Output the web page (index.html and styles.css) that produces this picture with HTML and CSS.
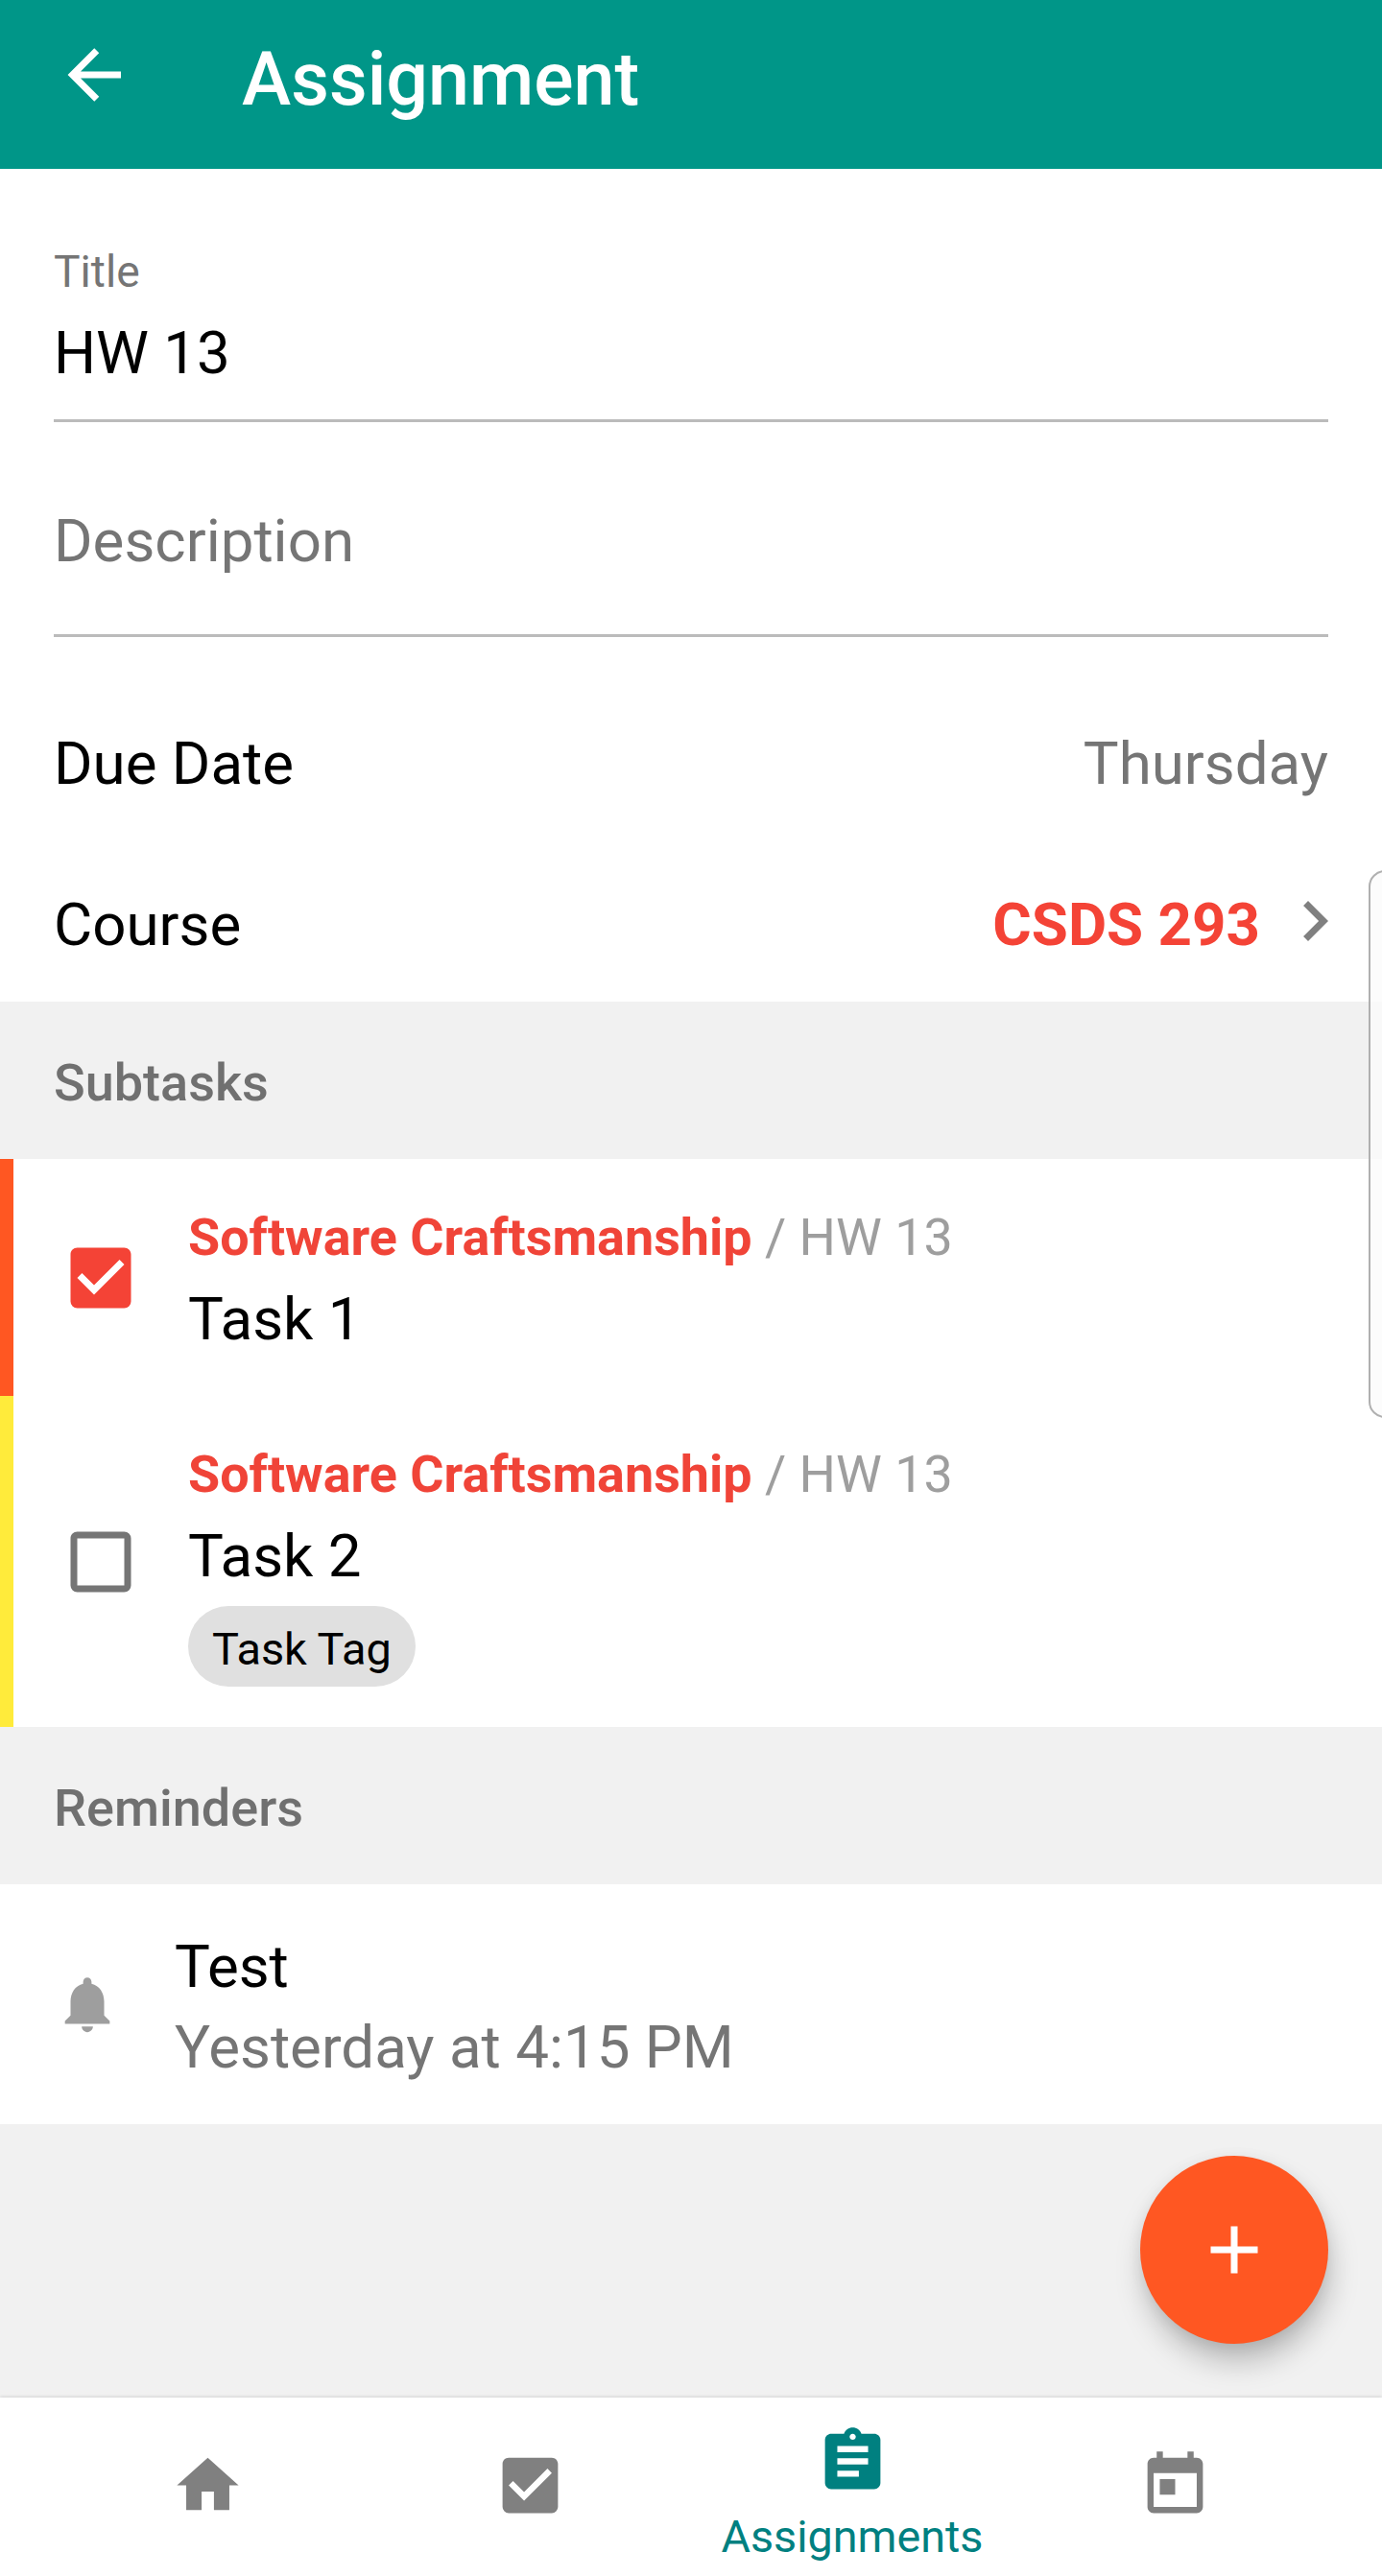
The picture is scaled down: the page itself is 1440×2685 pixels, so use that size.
FILE: index.html
```html
<!DOCTYPE html>
<html lang="en">
<head>
<meta charset="utf-8">
<title>Assignment</title>
<link rel="stylesheet" href="styles.css">
</head>
<body>
<div class="screen">
  <header class="app-bar">
    <svg class="icon" viewBox="0 0 24 24"><path d="M20 11v2H8l5.5 5.5-1.42 1.42L4.16 12l7.92-7.92L13.5 5.5 8 11h12z"/></svg>
    <h1 class="app-title">Assignment</h1>
  </header>

  <main class="content">
    <section class="form">
      <div class="field">
        <span class="field-label">Title</span>
        <span class="field-value">HW 13</span>
      </div>
      <div class="field field-empty">
        <span class="field-value muted">Description</span>
      </div>
      <div class="row row-date">
        <span>Due Date</span>
        <span class="muted">Thursday</span>
      </div>
      <div class="row">
        <span>Course</span>
        <span class="course-link">CSDS 293
          <svg class="icon chevron" viewBox="0 0 24 24"><path d="M8.59 16.58L13.17 12 8.59 7.41 10 6l6 6-6 6z"/></svg>
        </span>
      </div>
    </section>

    <h2 class="section-title">Subtasks</h2>
    <ul class="tasks">
      <li class="task task-high">
        <svg class="icon check-on" viewBox="0 0 24 24"><path d="M10 17l-5-5 1.41-1.42L10 14.17l7.59-7.59L19 8m0-5H5c-1.11 0-2 .89-2 2v14a2 2 0 0 0 2 2h14a2 2 0 0 0 2-2V5c0-1.11-.9-2-2-2z"/></svg>
        <div class="task-body">
          <div class="task-path"><b>Software Craftsmanship</b> / HW 13</div>
          <div class="task-name">Task 1</div>
        </div>
      </li>
      <li class="task task-medium">
        <svg class="icon check-off" viewBox="0 0 24 24"><path d="M19 3H5c-1.11 0-2 .89-2 2v14a2 2 0 0 0 2 2h14a2 2 0 0 0 2-2V5a2 2 0 0 0-2-2m0 2v14H5V5h14z"/></svg>
        <div class="task-body">
          <div class="task-path"><b>Software Craftsmanship</b> / HW 13</div>
          <div class="task-name">Task 2</div>
          <span class="chip">Task Tag</span>
        </div>
      </li>
    </ul>

    <h2 class="section-title">Reminders</h2>
    <div class="reminder">
      <svg class="bell" viewBox="0 0 24 24"><path d="M12 22c1.1 0 2-.9 2-2h-4c0 1.1.89 2 2 2zm6-6v-5c0-3.07-1.64-5.64-4.5-6.32V4c0-.83-.67-1.5-1.5-1.5s-1.5.67-1.5 1.5v.68C7.63 5.36 6 7.92 6 11v5l-2 2v1h16v-1l-2-2z"/></svg>
      <div class="reminder-body">
        <div>Test</div>
        <div class="muted">Yesterday at 4:15 PM</div>
      </div>
    </div>
  </main>

  <nav class="tabs">
    <a class="tab"><svg class="tab-icon" viewBox="0 0 24 24"><path d="M10 20v-6h4v6h5v-8h3L12 3 2 12h3v8z"/></svg></a>
    <a class="tab"><svg class="tab-icon" viewBox="0 0 24 24"><path d="M10 17l-5-5 1.41-1.42L10 14.17l7.59-7.59L19 8m0-5H5c-1.11 0-2 .89-2 2v14a2 2 0 0 0 2 2h14a2 2 0 0 0 2-2V5c0-1.11-.9-2-2-2z"/></svg></a>
    <a class="tab tab-active"><svg class="tab-icon" viewBox="0 0 24 24"><path d="M19 3h-4.18C14.4 1.84 13.3 1 12 1c-1.3 0-2.4.84-2.82 2H5c-1.1 0-2 .9-2 2v14c0 1.1.9 2 2 2h14c1.1 0 2-.9 2-2V5c0-1.1-.9-2-2-2zm-7 0c.55 0 1 .45 1 1s-.45 1-1 1-1-.45-1-1 .45-1 1-1zm2 14H7v-2h7v2zm3-4H7v-2h10v2zm0-4H7V7h10v2z"/></svg><span>Assignments</span></a>
    <a class="tab"><svg class="tab-icon" viewBox="0 0 24 24"><path d="M19 3h-1V1h-2v2H8V1H6v2H5c-1.11 0-1.99.9-1.99 2L3 19c0 1.1.89 2 2 2h14c1.1 0 2-.9 2-2V5c0-1.1-.9-2-2-2zm0 16H5V8h14v11zM7 10h5v5H7z"/></svg></a>
  </nav>

  <button class="fab" aria-label="Add"><svg class="icon" viewBox="0 0 24 24"><path d="M19 13h-6v6h-2v-6H5v-2h6V5h2v6h6z"/></svg></button>
  <div class="edge-handle"></div>
</div>
</body>
</html>
```

FILE: styles.css
```css
* { box-sizing: border-box; }

body {
  margin: 0;
  background: #f1f1f1;
  color: #000;
  font: 61.85px/72px Roboto, sans-serif;
}

h1, h2, ul { margin: 0; padding: 0; }
svg { display: block; flex: none; fill: currentColor; }

.screen {
  position: relative;
  display: flex;
  flex-direction: column;
  width: 1440px;
  height: 2685px;
  overflow: hidden;
}

.icon { width: 84px; height: 84px; }
.muted { color: #757575; }

.app-bar {
  display: flex;
  gap: 112px;
  height: 176px;
  padding: 36px 56px 0;
  background: #009688;
  color: #fff;
}
.app-title {
  padding-top: 2px;
  font-size: 77.2px;
  line-height: 90px;
  font-weight: 500;
}

.content { flex: 1; }

.form {
  height: 868px;
  padding: 80px 56px 0;
  background: #fff;
}
.field {
  display: flex;
  flex-direction: column;
  gap: 22px;
  padding-bottom: 33px;
  border-bottom: 3px solid #bbb;
}
.field-empty { padding: 88px 0 61px; }
.field-label {
  color: #757575;
  font-size: 46.2px;
  line-height: 54px;
}
.row {
  display: flex;
  justify-content: space-between;
  margin-bottom: 96px;
}
.row-date { margin-top: 96px; }
.course-link {
  display: flex;
  align-items: center;
  gap: 15px;
  height: 72px;
  margin-right: -28px;
  color: #f44336;
  font-weight: 700;
}
.chevron { color: #808080; margin-top: -8px; }

.section-title {
  height: 164px;
  padding: 53px 56px 0;
  color: #707070;
  font-size: 54px;
  line-height: 64px;
  font-weight: 500;
}

.tasks { list-style: none; background: #fff; }
.task {
  display: flex;
  align-items: center;
  gap: 49px;
  height: 247px;
  padding-left: 49px;
  border-left: 14px solid #ff5722;
}
.task-medium { height: 345px; border-color: #ffeb3b; }
.task-body { align-self: flex-start; padding-top: 50px; }
.check-on { color: #f44336; }
.check-off { color: #757575; }
.task-path {
  color: #9e9e9e;
  font-size: 53.9px;
  line-height: 64px;
}
.task-path b { color: #f04438; }
.task-name { padding-top: 17px; }
.chip {
  display: block;
  width: max-content;
  height: 84px;
  margin-top: 16px;
  padding: 18px 25px 0;
  border-radius: 42px;
  background: #e0e0e0;
  font-size: 46.9px;
  line-height: 54px;
}

.reminder {
  display: flex;
  align-items: center;
  gap: 56px;
  height: 250px;
  padding-left: 56px;
  background: #fff;
}
.bell { width: 70px; height: 70px; color: #9e9e9e; }
.reminder-body { display: grid; gap: 12px; padding-top: 6px; }

.tabs {
  display: grid;
  grid-template-columns: repeat(4, 336px);
  justify-content: center;
  height: 186px;
  background: #fff;
  box-shadow: 0 -1px 3px rgba(0, 0, 0, .12);
}
.tab {
  display: flex;
  flex-direction: column;
  align-items: center;
  padding-top: 53px;
  color: #808080;
}
.tab-icon { width: 77px; height: 77px; }
.tab-active {
  gap: 13px;
  padding-top: 28px;
  color: #008080;
  font-size: 46.7px;
  line-height: 54px;
}

.fab {
  position: absolute;
  right: 56px;
  bottom: 242px;
  display: grid;
  place-items: center;
  width: 196px;
  height: 196px;
  padding: 0;
  border: 0;
  border-radius: 50%;
  background: #ff5722;
  color: #fff;
  box-shadow: 3px 20px 32px -4px rgba(0, 0, 0, .27), 0 2px 16px rgba(0, 0, 0, .06);
}

.edge-handle {
  position: absolute;
  top: 907px;
  right: -20px;
  width: 34px;
  height: 571px;
  border: 2px solid #b0b0b0;
  border-radius: 18px;
  background: rgba(251, 251, 251, .8);
}
```
